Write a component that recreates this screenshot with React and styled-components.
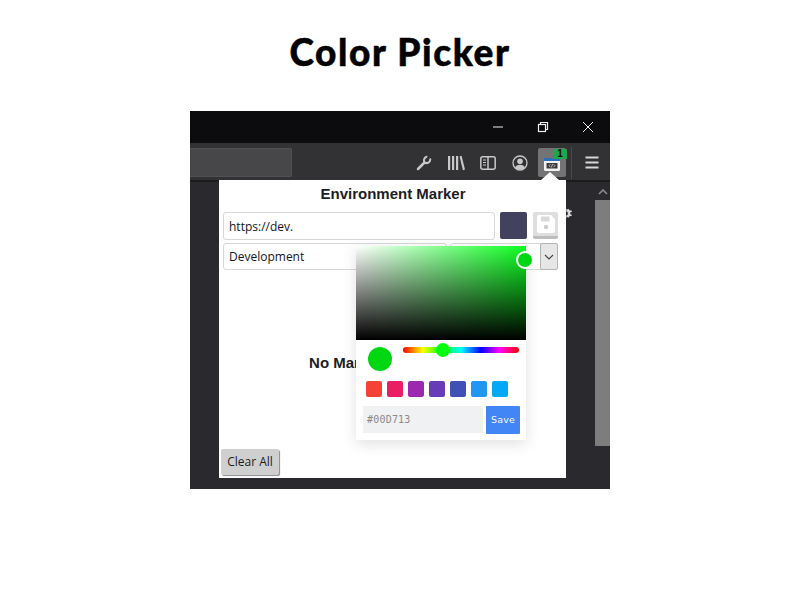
import React from 'react'
import styled, { createGlobalStyle } from 'styled-components'

const Global = createGlobalStyle`
  html, body { margin: 0; padding: 0; background: #fff; }
  * { box-sizing: border-box; }
`

const swatches = ['#f44336', '#e91e63', '#9c27b0', '#673ab7', '#3f51b5', '#2196f3', '#03a9f4']

function App() {
  return (
    <Page>
      <Global />
      <Title>Color Picker</Title>
      <Browser>
        <TitleBar>
          <WinButton>
            <svg width="12" height="12" viewBox="0 0 12 12"><path d="M1 6h10" stroke="#eee" strokeWidth="1" /></svg>
          </WinButton>
          <WinButton>
            <svg width="12" height="12" viewBox="0 0 12 12" fill="none" stroke="#eee" strokeWidth="1.2"><rect x="1.5" y="3.500" width="7" height="7" /><path d="M3.500 3.500v-2h7v7h-2" /></svg>
          </WinButton>
          <WinButton>
            <svg width="12" height="12" viewBox="0 0 12 12" stroke="#eee" strokeWidth="1"><path d="M1 1l10 10M11 1L1 11" /></svg>
          </WinButton>
        </TitleBar>
        <Toolbar>
          <UrlBar />
          <Icons>
            <ToolIcon>
              <svg width="16" height="16" viewBox="0 0 16 16" fill="none" stroke="#c8c8ca" strokeLinecap="round"><path d="M2 14l6.500-6.500" strokeWidth="2.500" /><path d="M14.300 4.300a3.900 3.900 0 0 1-5.600 3.400 3.900 3.900 0 0 1 1.800-6" strokeWidth="2" /></svg>
            </ToolIcon>
            <ToolIcon>
              <svg width="18" height="16" viewBox="0 0 18 16" fill="#c8c8ca"><rect x="1" y="1" width="2.200" height="14" /><rect x="5" y="1" width="2.200" height="14" /><rect x="9" y="1" width="2.200" height="14" /><path d="M12.600 1.400l2-.6L18 14.600l-2.100.6z" /></svg>
            </ToolIcon>
            <ToolIcon>
              <svg width="16" height="14" viewBox="0 0 16 14" fill="none" stroke="#c8c8ca" strokeWidth="1.500"><rect x=".8" y=".8" width="14.400" height="12.400" rx="2" /><path d="M8 1v12" /><path d="M3 4h3M3 6.500h3M3 9h3" strokeWidth="1" /></svg>
            </ToolIcon>
            <ToolIcon>
              <svg width="16" height="16" viewBox="0 0 16 16"><circle cx="8" cy="8" r="7" fill="none" stroke="#c8c8ca" strokeWidth="1.300" /><circle cx="8" cy="6.300" r="2.800" fill="#c8c8ca" /><path d="M3 12.400c1-2 3-2.700 5-2.700s4 .7 5 2.700c-1.200 1.400-3 2.100-5 2.100s-3.800-.7-5-2.100z" fill="#c8c8ca" /></svg>
            </ToolIcon>
            <ActiveTool>
              <svg width="16" height="13" viewBox="0 0 16 13"><rect width="16" height="13" rx="1.500" fill="#f2f2f2" /><rect width="16" height="3" fill="#2f6fb5" /><rect x="2.500" y="5" width="11" height="5.500" fill="#3a3a3a" /><path d="M6.400 6.200L5 7.700l1.400 1.500M9.600 6.200L11 7.700 9.600 9.200M8.600 6L7.400 9.400" stroke="#eee" strokeWidth=".7" fill="none" /></svg>
              <Badge>1</Badge>
            </ActiveTool>
            <Divider />
            <ToolIcon>
              <svg width="14" height="13" viewBox="0 0 14 13" fill="#d6d6d8"><rect width="13" height="2" x=".5" y=".5" /><rect width="13" height="2" x=".5" y="5.500" /><rect width="13" height="2" x=".5" y="10.500" /></svg>
            </ToolIcon>
          </Icons>
        </Toolbar>
        <Content>
          <Popup>
            <Arrow />
            <Heading>Environment Marker</Heading>
            <FormRow>
              <TextField value="https://dev." readOnly />
              <ColorButton />
              <SaveIcon>
                <svg width="20" height="20" viewBox="0 0 20 20"><path d="M3 1h12l4 4v12a2 2 0 0 1-2 2H3a2 2 0 0 1-2-2V3a2 2 0 0 1 2-2z" fill="#fff" /><rect x="5" y="2.500" width="8.500" height="5" fill="#d9d9d9" /><circle cx="10" cy="13" r="2.200" fill="#cfcfcf" /></svg>
              </SaveIcon>
            </FormRow>
            <FormRow>
              <SelectField size="224">Development</SelectField>
              <SelectField size="108">
                <SelectArrow>
                  <svg width="10" height="6" viewBox="0 0 10 6" fill="none" stroke="#444" strokeWidth="1.100"><path d="M1 1l4 4 4-4" /></svg>
                </SelectArrow>
              </SelectField>
            </FormRow>
            <Empty>No Markers Configured</Empty>
            <ClearButton>Clear All</ClearButton>
            <Picker>
              <Gradient>
                <ColorThumb />
              </Gradient>
              <Controls>
                <Preview />
                <Hue>
                  <HueThumb />
                </Hue>
              </Controls>
              <Swatches>
                {swatches.map((c) => <Swatch key={c} color={c} />)}
              </Swatches>
              <HexRow>
                <HexInput>#00D713</HexInput>
                <PickerSave>Save</PickerSave>
              </HexRow>
            </Picker>
          </Popup>
          <Side>
            <Gear>
              <svg width="7" height="11" viewBox="0 0 8 14" fill="#d8d8d8"><path d="M0 1l2 1 1-1 1 2 3 .5v1.500l-2 .5V8l2 .5V10l-3 .5-1 2-1-1-2 1V9.500c1.500-.5 2-1.500 2-2.500S1.500 5 0 4.500z" /></svg>
            </Gear>
          </Side>
          <Scrollbar>
            <ScrollUp>
              <svg width="10" height="6" viewBox="0 0 10 6" fill="none" stroke="#8a8a8c" strokeWidth="1.600"><path d="M1 5l4-4 4 4" /></svg>
            </ScrollUp>
            <ScrollThumb />
          </Scrollbar>
        </Content>
      </Browser>
    </Page>
  )
}

export default App

const Page = styled.div`
  width: 800px;
  height: 600px;
  display: flex;
  flex-direction: column;
  align-items: center;
  overflow: hidden;
`
const Title = styled.h1`
  margin: 0;
  height: 111px;
  padding-top: 28px;
  font-family: "Lato", sans-serif;
  font-weight: 900;
  font-size: 37px;
  line-height: 48px;
  letter-spacing: 1.6px;
  -webkit-text-stroke: 0.5px #000;
  color: #000;
`
const Browser = styled.div`
  width: 420px;
  height: 378px;
  background: #2a2a2e;
  display: flex;
  flex-direction: column;
  font-family: "Open Sans", "Liberation Sans", sans-serif;
`
const TitleBar = styled.div`
  height: 32px;
  background: #0c0c0e;
  display: flex;
  justify-content: flex-end;
`
const WinButton = styled.div`
  width: 45px;
  display: flex;
  align-items: center;
  justify-content: center;
`
const Toolbar = styled.div`
  height: 37px;
  background: #323234;
  display: flex;
  justify-content: space-between;
  align-items: flex-start;
  padding-top: 5px;
`
const UrlBar = styled.div`
  width: 102px;
  height: 29px;
  background: #474749;
  border: 1px solid #515153;
  border-left: none;
  border-radius: 0 2px 2px 0;
`
const Icons = styled.div`
  display: flex;
  align-items: center;
  height: 29px;
  padding-right: 2px;
`
const ToolIcon = styled.div`
  width: 32px;
  height: 29px;
  display: flex;
  align-items: center;
  justify-content: center;
`
const ActiveTool = styled.div`
  position: relative;
  width: 28px;
  height: 29px;
  margin: 0 5px 0 2px;
  padding-top: 3px;
  background: #737373;
  border-radius: 2px;
  display: flex;
  align-items: center;
  justify-content: center;
`
const Badge = styled.span`
  position: absolute;
  top: 1px;
  right: -1px;
  width: 14px;
  height: 10px;
  background: #1fa84a;
  border-radius: 1px;
  color: #0c0c0c;
  font: bold 10px/10px "Liberation Sans", sans-serif;
  text-align: center;
`
const Divider = styled.div`
  width: 1px;
  height: 32px;
  margin-right: 4px;
  background: #49494b;
`
const Content = styled.div`
  flex: 1;
  display: flex;
  padding-left: 29px;
  min-height: 0;
  box-shadow: inset 0 2px 0 #1c1c1e;
`
const Popup = styled.div`
  position: relative;
  width: 347px;
  height: 298px;
  background: #fff;
  padding: 6px 8px 3px 4px;
  display: flex;
  flex-direction: column;
`
const Arrow = styled.div`
  position: absolute;
  top: -8px;
  right: 7px;
  border-left: 9px solid transparent;
  border-right: 9px solid transparent;
  border-bottom: 8px solid #fff;
`
const Heading = styled.div`
  font-family: "Liberation Sans", Arial, sans-serif;
  font-weight: bold;
  font-size: 15px;
  line-height: 16px;
  color: #1d1d24;
  text-align: center;
  padding-left: 5px;
  margin-bottom: 10px;
`
const FormRow = styled.div`
  display: flex;
  gap: 4px;
  margin-bottom: 3px;
`
const TextField = styled.input`
  width: 272px;
  height: 28px;
  border: 1px solid #d8d8d8;
  border-radius: 3px;
  padding: 0 5px;
  margin-right: 1px;
  font-family: "Open Sans", sans-serif;
  font-size: 12px;
  color: #15141a;
  outline: none;
`
const ColorButton = styled.div`
  width: 27px;
  height: 27px;
  margin-right: 2px;
  background: #42425e;
  border-radius: 2px;
`
const SaveIcon = styled.div`
  width: 25px;
  height: 27px;
  background: #dedede;
  border-bottom: 3px solid #bdbdbd;
  border-radius: 2px;
  display: flex;
  align-items: center;
  justify-content: center;
`
const SelectField = styled.div`
  position: relative;
  width: ${(p) => p.size}px;
  height: 27px;
  border: 1px solid #d8d8d8;
  border-radius: 3px;
  padding: 0 5px;
  font-size: 12px;
  line-height: 25px;
  color: #15141a;
  &:last-child { margin-left: -1px; }
`
const SelectArrow = styled.div`
  position: absolute;
  top: -1px;
  right: -1px;
  width: 18px;
  height: 27px;
  background: #e6e6e6;
  border: 1px solid #b4b4b4;
  border-radius: 2px;
  display: flex;
  align-items: center;
  justify-content: center;
`
const Empty = styled.div`
  flex: 1;
  display: flex;
  align-items: center;
  justify-content: center;
  padding: 3px 0 0 3px;
  font-family: "Liberation Sans", Arial, sans-serif;
  font-weight: bold;
  font-size: 15px;
  color: #1d1d24;
`
const ClearButton = styled.div`
  align-self: flex-start;
  margin-left: -2px;
  width: 58px;
  height: 26px;
  background: #cfcfcf;
  border-radius: 2px;
  box-shadow: 1px 1px 1px #8a8a8a;
  font-size: 12px;
  line-height: 26px;
  text-align: center;
  color: #1c1c1c;
`
const Picker = styled.div`
  position: absolute;
  left: 137px;
  top: 66px;
  width: 170px;
  height: 194px;
  background: #fff;
  box-shadow: 0 4px 14px rgba(0, 0, 0, 0.12);
`
const Gradient = styled.div`
  position: relative;
  height: 94px;
  background: linear-gradient(to top, #000, transparent), linear-gradient(to right, #fff, #0bff1f);
`
const ColorThumb = styled.div`
  position: absolute;
  top: 5px;
  right: -8px;
  width: 18px;
  height: 18px;
  border-radius: 50%;
  background: #00d713;
  border: 2px solid #fff;
`
const Controls = styled.div`
  display: flex;
  padding: 7px 7px 0 12px;
  gap: 11px;
  height: 41px;
`
const Preview = styled.div`
  width: 24px;
  height: 24px;
  border-radius: 50%;
  background: #00d713;
`
const Hue = styled.div`
  position: relative;
  flex: 1;
  height: 6px;
  border-radius: 3px;
  background: linear-gradient(to right, #f00 0%, #ff0 17%, #0f0 33%, #0ff 50%, #00f 67%, #f0f 83%, #f00 100%);
`
const HueThumb = styled.div`
  position: absolute;
  top: -4px;
  left: 33px;
  width: 14px;
  height: 14px;
  border-radius: 50%;
  background: #0f1;
`
const Swatches = styled.div`
  display: flex;
  gap: 5px;
  padding-left: 10px;
  height: 25px;
`
const Swatch = styled.div`
  width: 16px;
  height: 16px;
  border-radius: 2px;
  background: ${(p) => p.color};
`
const HexRow = styled.div`
  display: flex;
  padding-left: 7px;
  gap: 3px;
`
const HexInput = styled.div`
  width: 120px;
  height: 27px;
  background: #f0f1f3;
  padding-left: 4px;
  font-family: "DejaVu Sans Mono", monospace;
  font-size: 10px;
  line-height: 27px;
  letter-spacing: 0.2px;
  color: #8a8a8a;
`
const PickerSave = styled.div`
  width: 34px;
  height: 28px;
  background: #4285f4;
  border-radius: 1px;
  font-family: "DejaVu Sans", sans-serif;
  font-size: 9.5px;
  line-height: 28px;
  letter-spacing: 0.2px;
  text-align: center;
  color: #f4f8ff;
`
const Side = styled.div`
  width: 29px;
  padding-top: 28px;
`
const Gear = styled.div`
  display: flex;
`
const Scrollbar = styled.div`
  width: 15px;
  display: flex;
  flex-direction: column;
  margin-top: 3px;
`
const ScrollUp = styled.div`
  height: 17px;
  display: flex;
  align-items: center;
  justify-content: center;
`
const ScrollThumb = styled.div`
  height: 246px;
  background: #7d7d7d;
`
